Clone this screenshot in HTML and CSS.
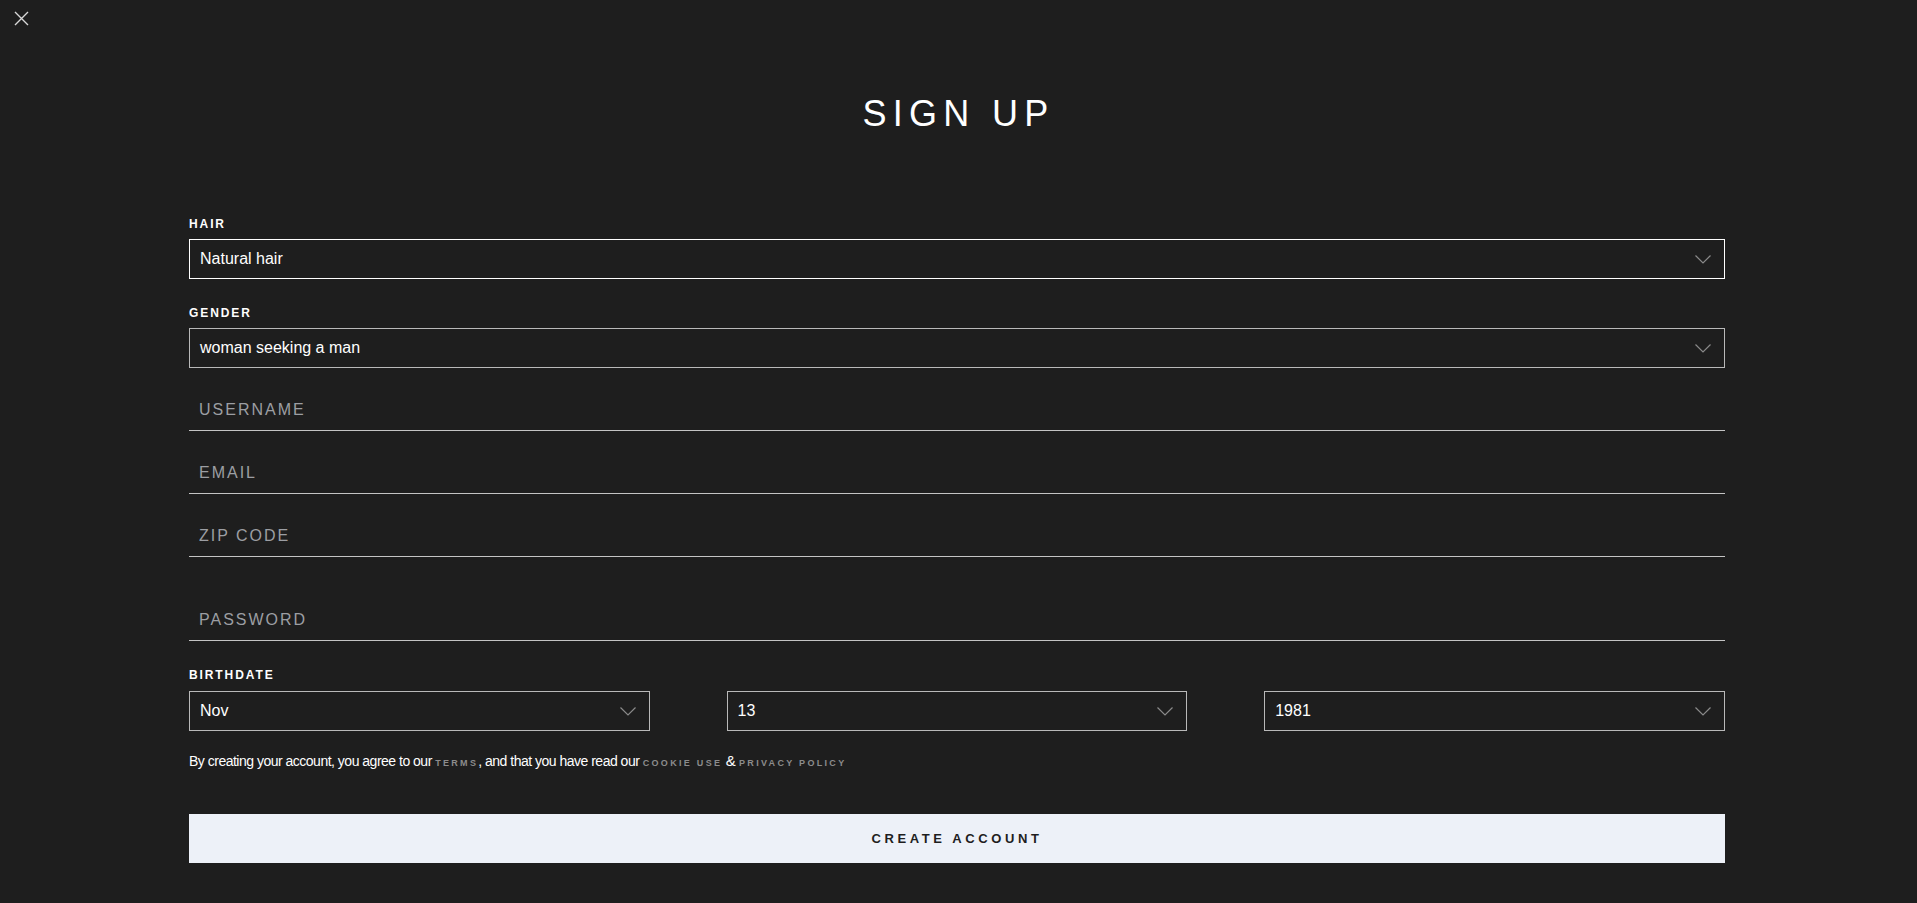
FILE: index.html
```html
<!DOCTYPE html>
<html lang="en">
<head>
  <meta charset="UTF-8">
  <meta name="viewport" content="width=device-width, initial-scale=1.0">
  <title>Sign up</title>
  <link rel="stylesheet" href="styles.css">
</head>
<body>

<a class="close" href="#" aria-label="Close">
  <svg width="15" height="15" viewBox="0 0 15 15"><path d="M1 1 L14 14 M14 1 L1 14" stroke="#d8d8d8" stroke-width="1.4" fill="none"/></svg>
</a>

<h1 class="title">SIGN UP</h1>

<form class="signup">
  <div class="field">
    <label class="field-label">HAIR</label>
    <div class="select active">
      <span>Natural hair</span>
      <svg class="chev" width="16" height="9" viewBox="0 0 16 9"><polyline points="0.5,0.5 8,8 15.5,0.5" fill="none" stroke="#8a8a8a" stroke-width="1.2"/></svg>
    </div>
  </div>

  <div class="field last">
    <label class="field-label">GENDER</label>
    <div class="select">
      <span>woman seeking a man</span>
      <svg class="chev" width="16" height="9" viewBox="0 0 16 9"><polyline points="0.5,0.5 8,8 15.5,0.5" fill="none" stroke="#8a8a8a" stroke-width="1.2"/></svg>
    </div>
  </div>

  <input class="line-input" type="text" placeholder="USERNAME">
  <input class="line-input" type="email" placeholder="EMAIL">
  <input class="line-input" type="text" placeholder="ZIP CODE">
  <input class="line-input password" type="password" placeholder="PASSWORD">

  <div class="field birth">
    <label class="field-label">BIRTHDATE</label>
    <div class="date-row">
      <div class="select">
        <span>Nov</span>
        <svg class="chev" width="16" height="9" viewBox="0 0 16 9"><polyline points="0.5,0.5 8,8 15.5,0.5" fill="none" stroke="#8a8a8a" stroke-width="1.2"/></svg>
      </div>
      <div class="select">
        <span>13</span>
        <svg class="chev" width="16" height="9" viewBox="0 0 16 9"><polyline points="0.5,0.5 8,8 15.5,0.5" fill="none" stroke="#8a8a8a" stroke-width="1.2"/></svg>
      </div>
      <div class="select">
        <span>1981</span>
        <svg class="chev" width="16" height="9" viewBox="0 0 16 9"><polyline points="0.5,0.5 8,8 15.5,0.5" fill="none" stroke="#8a8a8a" stroke-width="1.2"/></svg>
      </div>
    </div>
  </div>

  <p class="terms">By creating your account, you agree to our <a href="#">Terms</a>, and that you have read our <a href="#">Cookie Use</a> <span class="amp">&amp;</span> <a href="#">Privacy Policy</a></p>

  <button class="create" type="button">CREATE ACCOUNT</button>
</form>

</body>
</html>
```

FILE: styles.css
```css
body {
  --background-color: #1e1e1e;
  --text-color: #ffffff;

  font-family: 'Liberation Sans', Arial, sans-serif;
  background-color: var(--background-color);
  color: var(--text-color);
  margin: 0;
}

.close {
  position: absolute;
  top: 11px;
  left: 14px;
  display: block;
  width: 15px;
  height: 15px;
}

.close svg {
  display: block;
}

.title {
  margin: 93px 0 0;
  text-align: center;
  font-size: 36px;
  font-weight: normal;
  letter-spacing: 6.3px;
  line-height: 41px;
}

.signup {
  width: 1536px;
  margin: 83px 0 0 189px;
}

.field {
  margin-bottom: 27px;
}

.field.last {
  margin-bottom: 0;
}

.field-label {
  display: block;
  font-size: 12px;
  font-weight: bold;
  letter-spacing: 1.9px;
  line-height: 14px;
  margin-bottom: 8px;
}

.select {
  box-sizing: border-box;
  height: 40px;
  border: 1px solid #b9b9b9;
  display: flex;
  align-items: center;
  justify-content: space-between;
  padding: 0 13px 0 10px;
  font-size: 16px;
  cursor: pointer;
}

.select.active {
  border-color: #ffffff;
}

.chev {
  display: block;
  margin-top: 1px;
}

.line-input {
  display: block;
  box-sizing: border-box;
  width: 100%;
  height: 63px;
  margin: 0;
  padding: 21px 10px 0;
  border: none;
  border-bottom: 1px solid #c4c4c4;
  background: transparent;
  color: #fff;
  font-family: inherit;
  font-size: 16px;
  letter-spacing: 2px;
  outline: none;
}

.line-input::placeholder {
  color: #9c9ea3;
}

.line-input.password {
  height: 84px;
  padding-top: 42px;
  margin-bottom: 27px;
}

.birth {
  margin-bottom: 0;
}

.birth .field-label {
  margin-bottom: 9px;
}

.date-row {
  display: grid;
  grid-template-columns: 30% 30% 30%;
  justify-content: space-between;
}

.terms {
  margin: 22px 0 0;
  font-size: 14px;
  letter-spacing: -0.5px;
  line-height: 16px;
}

.terms a {
  color: #8c8c8c;
  text-decoration: none;
  text-transform: uppercase;
  font-size: 9px;
  letter-spacing: 2.3px;
  font-weight: bold;
}

.terms .amp {
  font-size: 15px;
  letter-spacing: 0;
}

.create {
  display: block;
  width: 100%;
  height: 49px;
  margin-top: 43px;
  border: none;
  background: #edf1f8;
  color: #1e1e1e;
  font-family: 'Liberation Sans', Arial, sans-serif;
  font-size: 13px;
  font-weight: bold;
  letter-spacing: 3.6px;
  cursor: pointer;
}
```
